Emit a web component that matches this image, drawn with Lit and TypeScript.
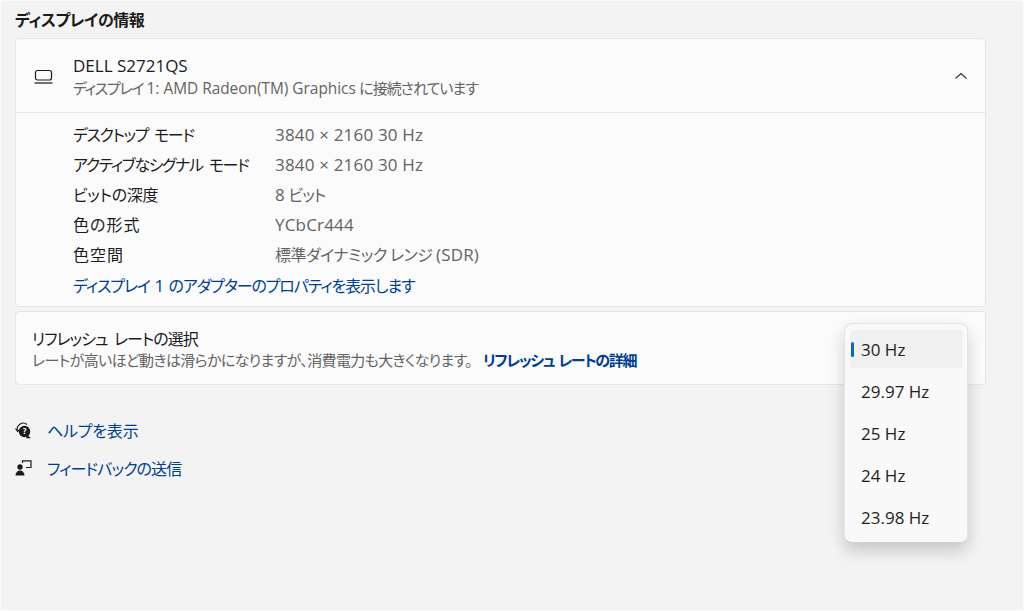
import { LitElement, css, html } from "lit";
import { customElement } from "lit/decorators.js";

const details = [
  [html`<span class="n14">デスクトップ モード</span>`, html`<span class="lat">3840 × 2160 30 Hz</span>`],
  [html`<span class="n14">アクティブなシグナル モード</span>`, html`<span class="lat">3840 × 2160 30 Hz</span>`],
  [html`<span class="n03">ビットの深度</span>`, html`<span class="lat">8</span> <span class="n10">ビット</span>`],
  [html`<span class="p10">色の形式</span>`, html`<span class="lat">YCbCr444</span>`],
  [html`<span class="p10">色空間</span>`, html`<span class="n05">標準ダイナミック レンジ</span> <span class="lat">(SDR)</span>`],
];

const rates = ["30 Hz", "29.97 Hz", "25 Hz", "24 Hz", "23.98 Hz"];

@customElement("app-root")
export class AppRoot extends LitElement {
  static styles = css`
    :host {
      display: block;
      position: relative;
      height: 611px;
      overflow: hidden;
      box-sizing: border-box;
      padding: 9px 37px 0 14px;
      background: #f3f3f3;
      border: 1px solid #fbfbfb;
      color: #1b1b1b;
      font-family: "Noto Sans CJK JP", sans-serif;
      font-feature-settings: "palt";
      font-size: 16px;
      line-height: 20px;
    }
    .n14 { letter-spacing: -1.4px; word-spacing: 4px; }
    .n13 { letter-spacing: -1.35px; word-spacing: 2px; }
    .n11 { letter-spacing: -1.1px; word-spacing: 2px; }
    .n10 { letter-spacing: -1px; }
    .n09 { letter-spacing: -0.9px; }
    .n065 { letter-spacing: -0.65px; }
    .n05 { letter-spacing: -0.5px; }
    .n03 { letter-spacing: -0.3px; }
    .n02 { letter-spacing: -0.2px; }
    .p10 { letter-spacing: 1px; }
    .lat {
      font-family: "Open Sans", sans-serif;
      font-size: 17px;
      letter-spacing: 0;
      word-spacing: 0;
    }
    .sub .lat {
      font-size: 15.4px;
    }
    .value .lat {
      letter-spacing: 0.18px;
    }
    h2 {
      margin: 0 0 9px;
      font-size: 16px;
      line-height: 19px;
      font-weight: 700;
    }
    .card {
      background: #fbfbfb;
      border: 1px solid #e6e6e6;
      border-radius: 4px;
    }
    .head {
      display: flex;
      align-items: center;
      height: 73px;
      padding: 0 16px 0 17px;
      border-bottom: 1px solid #e6e6e6;
    }
    .head .icon {
      width: 21px;
      height: 16px;
      margin-right: 19px;
    }
    .titles {
      flex: 1;
      padding-top: 4px;
    }
    .sub {
      color: #636363;
      font-size: 15px;
      line-height: 20px;
    }
    .titles .sub {
      margin-top: 2px;
    }
    .chevron {
      width: 14px;
      height: 8px;
      margin-right: 1px;
    }
    .body {
      padding: 6px 0 6px 57px;
    }
    .row {
      display: grid;
      grid-template-columns: 202px 1fr;
      height: 30px;
      align-items: center;
    }
    .row .value {
      color: #636363;
    }
    .link {
      color: #003e92;
    }
    .adapter {
      display: block;
      margin-top: 2px;
      line-height: 28px;
    }
    .refresh {
      margin-top: 4px;
      height: 72px;
      box-sizing: content-box;
      padding-left: 16px;
      display: flex;
      flex-direction: column;
      justify-content: center;
    }
    .refresh .title {
      padding-top: 2px;
      letter-spacing: -1px;
      word-spacing: 4px;
    }
    .refresh .sub {
      margin-top: 2px;
    }
    .refresh .sub .link {
      margin-left: 11px;
      font-weight: 700;
    }
    .help {
      margin-top: 35px;
      display: flex;
      flex-direction: column;
      gap: 18px;
    }
    .help a {
      display: flex;
      align-items: center;
      gap: 15px;
      height: 20px;
      color: #003e92;
    }
    .help svg {
      width: 17px;
      height: 17px;
    }
    .menu {
      position: absolute;
      left: 843px;
      top: 322px;
      width: 124px;
      height: 220px;
      box-sizing: border-box;
      padding: 6px 4px 6px 5px;
      background: #f9f9f9;
      border: 1px solid #e4e4e4;
      border-bottom-color: #d2d2d2;
      border-radius: 8px;
      box-shadow: 0 8px 16px rgba(0, 0, 0, 0.18);
    }
    .item {
      position: relative;
      height: 38px;
      margin-bottom: 4px;
      padding: 2px 0 0 11px;
      box-sizing: border-box;
      display: flex;
      align-items: center;
      border-radius: 4px;
      color: #1f1f1f;
    }
    .item.on {
      background: #f0f0f0;
    }
    .item.on::before {
      content: "";
      position: absolute;
      left: 1px;
      top: 12px;
      width: 3px;
      height: 15px;
      border-radius: 2px;
      background: #0f67c0;
    }
  `;

  render() {
    return html`
      <h2 class="n05">ディスプレイの情報</h2>
      <section class="card">
        <div class="head">
          <svg class="icon" viewBox="0 0 21 16" fill="none" stroke="#1b1b1b" stroke-width="1.2">
            <rect x="2.500" y="2.500" width="16" height="9.500" rx="2"></rect>
            <path d="M1.500 15h18" stroke="#444" stroke-width="1.500"></path>
          </svg>
          <div class="titles">
            <div class="lat">DELL S2721QS</div>
            <div class="sub"><span class="n13">ディスプレイ</span> <span class="lat">1: AMD Radeon(TM) Graphics</span> <span class="n10">に接続されています</span></div>
          </div>
          <svg class="chevron" viewBox="0 0 14 8" fill="none" stroke="#333" stroke-width="1.1">
            <path d="M1.500 6.500 7 1.500l5.500 5"></path>
          </svg>
        </div>
        <div class="body">
          ${details.map(
            ([k, v]) => html`<div class="row"><span>${k}</span><span class="value">${v}</span></div>`
          )}
          <a class="link adapter n11">ディスプレイ <span class="lat">1</span> のアダプターのプロパティを表示します</a>
        </div>
      </section>
      <section class="card refresh">
        <div class="title">リフレッシュ レートの選択</div>
        <div class="sub">
          <span class="n065">レートが高いほど動きは滑らかになりますが、消費電力も大きくなります。</span><a class="link n13">リフレッシュ レートの詳細</a>
        </div>
      </section>
      <div class="help">
        <a>
          <svg viewBox="0 0 17 17">
            <path d="M2.500 9A6 6 0 0 1 12 2.500" fill="none" stroke="#1b1b1b" stroke-width="1.200"></path>
            <path d="M0.500 6.500l2 3 2.400-2.200" fill="none" stroke="#1b1b1b" stroke-width="1.100"></path>
            <circle cx="9.500" cy="9.500" r="5.700" fill="#1b1b1b"></circle>
            <path d="M12.500 13l3.500 3.300h-5z" fill="#1b1b1b"></path>
            <text x="9.500" y="12.300" font-size="8" font-weight="700" text-anchor="middle" fill="#fff">?</text>
          </svg>
          <span class="n02">ヘルプを表示</span>
        </a>
        <a>
          <svg viewBox="0 0 17 17">
            <circle cx="5" cy="7" r="2.700" fill="#1b1b1b"></circle>
            <path d="M0.500 15.500c0-3 2-5 4.500-5s4.500 2 4.500 5z" fill="#1b1b1b"></path>
            <path d="M7.500 3V0.800H16V7.500H11" fill="none" stroke="#1b1b1b" stroke-width="1.200"></path>
          </svg>
          <span class="n09">フィードバックの送信</span>
        </a>
      </div>
      <div class="menu">
        ${rates.map((r, i) => html`<div class="item lat ${i === 0 ? "on" : ""}">${r}</div>`)}
      </div>
    `;
  }
}
